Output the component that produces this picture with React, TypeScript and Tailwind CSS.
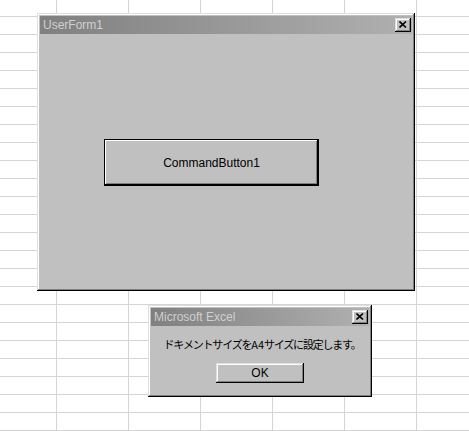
import React from "react";

const bevelOut =
  "shadow-[inset_-1px_-1px_#000000,inset_1px_1px_#dfdfdf,inset_-2px_-2px_#808080,inset_2px_2px_#ffffff]";

function CloseButton() {
  return (
    <div
      className={`flex h-[14px] w-[16px] items-center justify-center bg-[#c0c0c0] ${bevelOut}`}
    >
      <svg width="8" height="7" viewBox="0 0 8 7" className="mt-[-1px]">
        <path
          d="M0.5 0.5 L7 6.5 M7 0.5 L0.5 6.5"
          stroke="#000"
          strokeWidth="1.6"
          fill="none"
        />
      </svg>
    </div>
  );
}

function TitleBar({ title }: { title: string }) {
  return (
    <div className="flex h-[18px] items-center justify-between bg-[linear-gradient(to_right,#808080,#b0b0b0)] pl-[3px] pr-[1px]">
      <span className="font-['Liberation_Sans',sans-serif] text-[12px] leading-none text-[#d0d0d0]">
        {title}
      </span>
      <CloseButton />
    </div>
  );
}

export default function App() {
  return (
    <div className="relative h-[431px] w-[469px] overflow-hidden bg-white bg-[linear-gradient(to_right,#d4d4d4_1px,transparent_1px),linear-gradient(to_bottom,#d4d4d4_1px,transparent_1px)] [background-position:56px_16px] [background-size:72px_18px]">
      {/* UserForm designer window */}
      <div
        className={`absolute left-[37px] top-[13px] flex h-[278px] w-[378px] flex-col bg-[#c0c0c0] p-[3px] ${bevelOut}`}
      >
        <TitleBar title="UserForm1" />
        <div className="flex-1 pl-[64px] pt-[105px]">
          <button className="flex h-[47px] w-[215px] items-center justify-center border border-black bg-[#c0c0c0] shadow-[inset_-1px_-1px_#000000,inset_1px_1px_#ffffff,inset_-2px_-2px_#808080] font-['Liberation_Sans',sans-serif] text-[12px] text-black">
            CommandButton1
          </button>
        </div>
      </div>

      {/* Message box */}
      <div
        className={`absolute left-[148px] top-[305px] flex h-[92px] w-[224px] flex-col bg-[#c0c0c0] p-[3px] ${bevelOut}`}
      >
        <TitleBar title="Microsoft Excel" />
        <div className="flex flex-1 flex-col items-center">
          <p className="mt-[12px] pl-[4px] font-['Noto_Sans_CJK_JP',sans-serif] text-[11px] leading-[12px] tracking-[-1.2px] text-black">
            ドキメントサイズを
            <span className="tracking-[0px]">A4</span>
            サイズに設定します。
          </p>
          <button
            className={`mt-[13px] flex h-[20px] w-[88px] items-center justify-center bg-[#c0c0c0] font-['Liberation_Sans',sans-serif] text-[12px] text-black ${bevelOut}`}
          >
            OK
          </button>
        </div>
      </div>
    </div>
  );
}
